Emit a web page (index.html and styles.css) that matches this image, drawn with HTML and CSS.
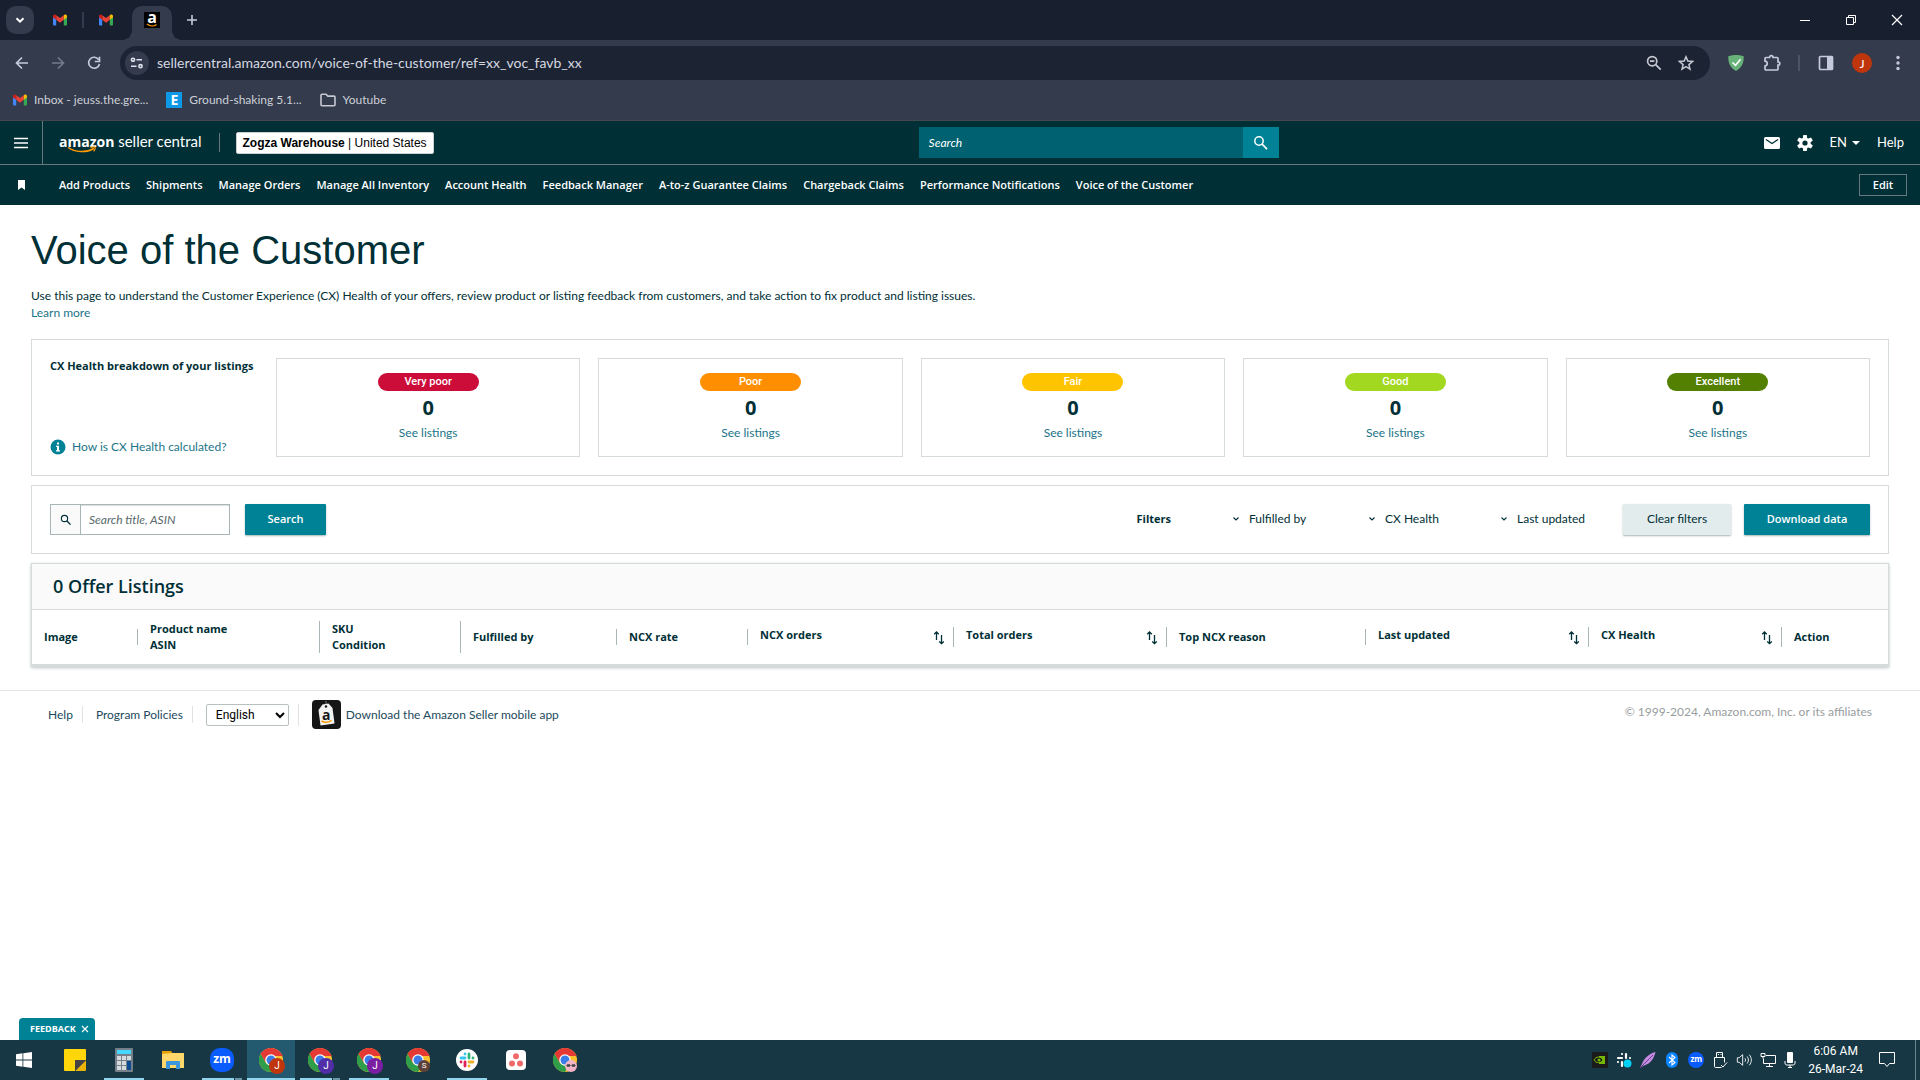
FILE: index.html
```html
<!DOCTYPE html>
<html lang="en">
<head>
  <meta charset="UTF-8" />
  <meta name="viewport" content="width=device-width, initial-scale=1.0" />
  <title>Voice of the Customer</title>
  <link rel="stylesheet" href="styles.css">
</head>
<body>

<!-- shared icons -->
<svg class="defs" width="0" height="0" aria-hidden="true">
  <symbol id="gmail" viewBox="0 0 14 12">
    <path fill="#4285f4" d="M0 3v7.500a1 1 0 0 0 1 1h2.200V5z"/>
    <path fill="#34a853" d="M14 3v7.500a1 1 0 0 1-1 1h-2.200V5z"/>
    <path fill="#ea4335" d="M3.200 5.800V1.200L7 4.100l3.800-2.900v4.600L7 8.700z"/>
    <path fill="#c5221f" d="M0 2.300C0 .6 1.700 0 2.800.9l.4.300v4.600L0 3.400z"/>
    <path fill="#fbbc04" d="M14 2.300C14 .6 12.300 0 11.200.9l-.4.300v4.600L14 3.400z"/>
  </symbol>
  <symbol id="search" viewBox="0 0 16 16">
    <circle cx="6" cy="6" r="4.200" fill="none" stroke="currentColor" stroke-width="1.500"/>
    <path d="M9 9l5 5.200" stroke="currentColor" stroke-width="1.800"/>
  </symbol>
  <symbol id="chevron" viewBox="0 0 8 8">
    <path d="M1.500 2.500L4 5l2.500-2.500" fill="none" stroke="currentColor" stroke-width="1.100"/>
  </symbol>
  <symbol id="sort" viewBox="0 0 12 14">
    <path d="M3.500 9V1M1.200 3.200L3.500 1l2.300 2.200M8.500 4v8.500M6.200 10.500l2.300 2.200 2.300-2.200" fill="none" stroke="currentColor" stroke-width="1.300"/>
  </symbol>
  <symbol id="chrome" viewBox="0 0 24 24">
    <circle cx="12" cy="12" r="12" fill="#fbc02d"/>
    <path fill="#e53935" d="M1.600 6A12 12 0 0 1 22.400 6L24 8H12L6.800 15z"/>
    <path fill="#2e9e4a" d="M1.600 6A12 12 0 0 0 12 24l5.200-9L12 17.500 6.800 15z"/>
    <circle cx="12" cy="12" r="5.800" fill="#fff"/>
    <circle cx="12" cy="12" r="4.500" fill="#3b7de8"/>
  </symbol>
</svg>

<!-- browser window -->
<div class="browser">
  <div class="tabs">
    <button class="tab-search" aria-label="Search tabs"><svg width="12" height="12" viewBox="0 0 12 12"><path d="M2.500 4.200L6 7.700l3.500-3.500" fill="none" stroke="#fff" stroke-width="2"/></svg></button>
    <button class="tab" aria-label="Gmail"><svg width="14" height="12"><use href="#gmail"/></svg></button>
    <span class="tab-line"></span>
    <button class="tab" aria-label="Gmail"><svg width="14" height="12"><use href="#gmail"/></svg></button>
    <button class="tab tab-active" aria-label="Amazon Seller Central"><span class="amazon-a">a<svg width="12" height="4" viewBox="0 0 12 4"><path d="M1 1c3 2.500 7 2.500 9.500.5" fill="none" stroke="#f90" stroke-width="1.300"/></svg></span></button>
    <button class="tab-new" aria-label="New tab"><svg width="12" height="12" viewBox="0 0 12 12"><path d="M6 1v10M1 6h10" stroke="#c5cbdc" stroke-width="1.600"/></svg></button>
    <div class="window-buttons">
      <button aria-label="Minimize"><svg width="12" height="12" viewBox="0 0 12 12"><path d="M1 6.500h10" stroke="#fff"/></svg></button>
      <button aria-label="Restore"><svg width="12" height="12" viewBox="0 0 12 12"><path d="M1.500 3.500h7v7h-7zM3.500 3.500v-2h7v7h-2" fill="none" stroke="#fff"/></svg></button>
      <button aria-label="Close"><svg width="12" height="12" viewBox="0 0 12 12"><path d="M1 1l10 10M11 1L1 11" stroke="#fff" stroke-width="1.200"/></svg></button>
    </div>
  </div>

  <div class="toolbar">
    <button class="tool" aria-label="Back"><svg width="16" height="16" viewBox="0 0 16 16"><path d="M14 8H3M8 2.500L2.500 8 8 13.500" fill="none" stroke="#c5cbdc" stroke-width="1.700"/></svg></button>
    <button class="tool" aria-label="Forward"><svg width="16" height="16" viewBox="0 0 16 16"><path d="M2 8h11M8 2.500L13.500 8 8 13.500" fill="none" stroke="#737b8b" stroke-width="1.700"/></svg></button>
    <button class="tool" aria-label="Reload"><svg width="16" height="16" viewBox="0 0 16 16"><path d="M12.800 4.800A5.500 5.500 0 1 0 13.500 9" fill="none" stroke="#c5cbdc" stroke-width="1.700"/><path d="M13.500 1.800v4.700H8.800" fill="none" stroke="#c5cbdc" stroke-width="1.700"/></svg></button>
    <div class="omnibox">
      <button class="site-info" aria-label="Site information"><svg width="14" height="12" viewBox="0 0 14 12"><g fill="none" stroke="#dfe3ee" stroke-width="1.600"><circle cx="3" cy="2.800" r="1.600"/><path d="M6.500 2.800H12M1 9.200h5.500"/><circle cx="10.500" cy="9.200" r="1.600"/></g></svg></button>
      <input type="text" aria-label="Address" value="sellercentral.amazon.com/voice-of-the-customer/ref=xx_voc_favb_xx">
      <button aria-label="Zoom"><svg width="16" height="16" viewBox="0 0 16 16"><g fill="none" stroke="#c6c9d2" stroke-width="1.700"><circle cx="6.200" cy="6.200" r="4.600"/><path d="M9.700 9.700l5 5M4 6.200h4.400"/></g></svg></button>
      <button aria-label="Bookmark this tab"><svg width="16" height="16" viewBox="0 0 16 16"><path d="M8 1.800l1.800 4.300 4.700.4-3.600 3.100 1.100 4.500L8 11.700l-4 2.400 1.100-4.500-3.600-3.100 4.700-.4z" fill="none" stroke="#c6c9d2" stroke-width="1.500"/></svg></button>
    </div>
    <div class="extensions">
      <button aria-label="Ad blocker"><svg width="16" height="16" viewBox="0 0 16 16"><path fill="#67b279" d="M8 0c2.500 0 5 .4 7.700 1.300C15.700 5 16 11.500 8 16 0 11.500.3 5 .3 1.300 3 .4 5.500 0 8 0z"/><path d="M4.500 7.500l3 2.800 5-6" fill="none" stroke="#fff" stroke-width="1.600"/></svg></button>
      <button aria-label="Extensions"><svg width="18" height="18" viewBox="0 0 18 18"><path d="M2 4.500a1 1 0 0 1 1-1h3.500C6.500.9 10 .9 10 3.500h4a1 1 0 0 1 1 1v3.300c2.400 0 2.400 3.400 0 3.400V15a1 1 0 0 1-1 1H3a1 1 0 0 1-1-1v-3c3-.4 3-4.400 0-4.800z" fill="none" stroke="#c5cbdc" stroke-width="1.700"/></svg></button>
      <span class="tool-line"></span>
      <button aria-label="Side panel"><svg width="16" height="16" viewBox="0 0 16 16"><rect x="1.500" y="1.500" width="13" height="13" rx="1" fill="none" stroke="#c5cbdc" stroke-width="1.700"/><path fill="#c5cbdc" d="M9 1h6v14H9z"/></svg></button>
      <button class="profile" aria-label="Profile J">J</button>
      <button aria-label="Menu"><svg width="16" height="16" viewBox="0 0 16 16" fill="#c5cbdc"><circle cx="8" cy="2.500" r="1.700"/><circle cx="8" cy="8" r="1.700"/><circle cx="8" cy="13.500" r="1.700"/></svg></button>
    </div>
  </div>

  <div class="bookmarks">
    <a href="#"><svg width="14" height="12"><use href="#gmail"/></svg>Inbox - jeuss.the.gre...</a>
    <a href="#"><span class="e-icon">E</span>Ground-shaking 5.1...</a>
    <a href="#"><svg width="16" height="14" viewBox="0 0 16 14"><path d="M1 2.200a1 1 0 0 1 1-1h4l1.800 1.900H14a1 1 0 0 1 1 1v7.700a1 1 0 0 1-1 1H2a1 1 0 0 1-1-1z" fill="none" stroke="#c6c9d2" stroke-width="1.600"/></svg>Youtube</a>
  </div>
</div>

<!-- seller central header -->
<header>
  <div class="header-top">
    <button class="menu-button" aria-label="Menu"><svg width="14" height="12" viewBox="0 0 14 12"><path d="M0 1.500h14M0 6h14M0 10.500h14" stroke="#fff" stroke-width="1.600"/></svg></button>
    <a class="logo" href="#"><b>amazon</b> <span>seller central</span>
      <svg width="30" height="8" viewBox="0 0 30 8"><path d="M1 1.500c7 5 18 5.500 26 1" fill="none" stroke="#f90" stroke-width="1.500"/><path d="M23.500 1.400c2-.6 4-.6 4.500 0 .4.700-.2 2.600-1.300 4" fill="none" stroke="#f90" stroke-width="1.200"/></svg>
    </a>
    <button class="account"><b>Zogza Warehouse</b> | United States</button>
    <form class="header-search">
      <input type="text" placeholder="Search" aria-label="Search Seller Central">
      <button type="button" aria-label="Search"><svg width="16" height="16"><use href="#search"/></svg></button>
    </form>
    <div class="header-links">
      <a href="#" aria-label="Messages"><svg width="16" height="12" viewBox="0 0 16 12"><rect width="16" height="12" rx="1.500" fill="#fff"/><path d="M2 2.500l6 4 6-4" fill="none" stroke="#002f36" stroke-width="1.300"/></svg></a>
      <a href="#" aria-label="Settings"><svg width="16" height="16" viewBox="0 0 16 16"><g fill="#fff"><circle cx="8" cy="8" r="5.600"/><path d="M6.200 0h3.600l.4 3.500H5.800zM6.200 16h3.600l.4-3.500H5.800z"/><path d="M6.200 0h3.600l.4 3.500H5.800zM6.200 16h3.600l.4-3.500H5.800z" transform="rotate(60 8 8)"/><path d="M6.200 0h3.600l.4 3.500H5.800zM6.200 16h3.600l.4-3.500H5.800z" transform="rotate(120 8 8)"/></g><circle cx="8" cy="8" r="2.600" fill="#002f36"/></svg></a>
      <button class="language">EN<svg width="8" height="4" viewBox="0 0 8 4"><path fill="#fff" d="M0 0h8L4 4z"/></svg></button>
      <a href="#">Help</a>
    </div>
  </div>
  <nav>
    <svg class="flag" width="7" height="10" viewBox="0 0 7 10"><path fill="#fff" d="M0 0h7v10L3.500 7.500 0 10z"/></svg>
    <a href="#">Add Products</a>
    <a href="#">Shipments</a>
    <a href="#">Manage Orders</a>
    <a href="#">Manage All Inventory</a>
    <a href="#">Account Health</a>
    <a href="#">Feedback Manager</a>
    <a href="#">A-to-z Guarantee Claims</a>
    <a href="#">Chargeback Claims</a>
    <a href="#">Performance Notifications</a>
    <a href="#">Voice of the Customer</a>
    <button class="edit">Edit</button>
  </nav>
</header>

<main>
  <h1>Voice of the Customer</h1>
  <p class="intro">Use this page to understand the Customer Experience (CX) Health of your offers, review product or listing feedback from customers, and take action to fix product and listing issues.<br><a href="#">Learn more</a></p>

  <section class="panel breakdown">
    <div class="breakdown-info">
      <h2>CX Health breakdown of your listings</h2>
      <a href="#"><svg width="16" height="16" viewBox="0 0 16 16"><circle cx="8" cy="8" r="7.500" fill="#008296"/><path fill="#fff" d="M7 3.500h2v2H7zM6 6.800h3v4.400h1v1.300H6v-1.300h1V8.100H6z"/></svg>How is CX Health calculated?</a>
    </div>
    <div class="card"><span class="pill very-poor">Very poor</span><strong>0</strong><a href="#">See listings</a></div>
    <div class="card"><span class="pill poor">Poor</span><strong>0</strong><a href="#">See listings</a></div>
    <div class="card"><span class="pill fair">Fair</span><strong>0</strong><a href="#">See listings</a></div>
    <div class="card"><span class="pill good">Good</span><strong>0</strong><a href="#">See listings</a></div>
    <div class="card"><span class="pill excellent">Excellent</span><strong>0</strong><a href="#">See listings</a></div>
  </section>

  <section class="panel filter-bar">
    <form class="listing-search">
      <label for="asin"><svg width="12" height="12"><title>Search listings</title><use href="#search"/></svg></label>
      <input id="asin" type="text" placeholder="Search title, ASIN">
      <button type="button" class="btn btn-primary btn-search">Search</button>
    </form>
    <div class="filters">
      <strong>Filters</strong>
      <label><svg width="8" height="8"><use href="#chevron"/></svg><select aria-label="Fulfilled by"><option>Fulfilled by</option></select></label>
      <label><svg width="8" height="8"><use href="#chevron"/></svg><select aria-label="CX Health"><option>CX Health</option></select></label>
      <label><svg width="8" height="8"><use href="#chevron"/></svg><select aria-label="Last updated"><option>Last updated</option></select></label>
    </div>
    <button class="btn btn-clear">Clear filters</button>
    <button class="btn btn-primary btn-download">Download data</button>
  </section>

  <section class="panel listings">
    <h2>0 Offer Listings</h2>
    <table>
      <colgroup>
        <col class="c-image"><col class="c-name"><col class="c-sku"><col class="c-fulfilled"><col class="c-rate"><col class="c-ncx"><col class="c-total"><col class="c-reason"><col class="c-updated"><col class="c-health"><col>
      </colgroup>
      <thead>
        <tr>
          <th><div>Image</div></th>
          <th><div>Product name<br>ASIN</div></th>
          <th><div>SKU<br>Condition</div></th>
          <th><div>Fulfilled by</div></th>
          <th><div>NCX rate</div></th>
          <th><div class="sortable">NCX orders<button aria-label="Sort by NCX orders"><svg width="12" height="14"><use href="#sort"/></svg></button></div></th>
          <th><div class="sortable">Total orders<button aria-label="Sort by total orders"><svg width="12" height="14"><use href="#sort"/></svg></button></div></th>
          <th><div>Top NCX reason</div></th>
          <th><div class="sortable">Last updated<button aria-label="Sort by last updated"><svg width="12" height="14"><use href="#sort"/></svg></button></div></th>
          <th><div class="sortable">CX Health<button aria-label="Sort by CX Health"><svg width="12" height="14"><use href="#sort"/></svg></button></div></th>
          <th><div>Action</div></th>
        </tr>
      </thead>
    </table>
  </section>
</main>

<footer>
  <a class="foot-help" href="#">Help</a>
  <a class="foot-policies" href="#">Program Policies</a>
  <div class="foot-language"><select aria-label="Language"><option>English</option></select></div>
  <a class="foot-app" href="#"><svg width="29" height="29" viewBox="0 0 29 29"><rect width="29" height="29" rx="4" fill="#161616"/><path d="M14 6V1" stroke="#777"/><path fill="#f4f4f4" d="M10.500 4.500l6-1 4 4.500 2 15.500-14 2L6.500 10z"/><circle cx="14" cy="6.500" r="1.200" fill="#161616"/><text x="10" y="19.500" font-size="14" font-weight="700" font-family="Open Sans" fill="#161616">a</text><path d="M9.500 21c3.500 2 7 1.500 10-.7" fill="none" stroke="#f90" stroke-width="1.500"/></svg>Download the Amazon Seller mobile app</a>
  <small>© 1999-2024, Amazon.com, Inc. or its affiliates</small>
</footer>

<div class="feedback-row">
  <button class="feedback">FEEDBACK <svg width="8" height="8" viewBox="0 0 8 8"><path d="M1 1l6 6M7 1L1 7" stroke="#fff" stroke-width="1.100"/></svg></button>
</div>

<!-- windows taskbar -->
<div class="taskbar">
  <button aria-label="Start"><svg width="16" height="16" viewBox="0 0 16 16" fill="#fff"><path d="M0 2.200l6.500-.9v6.300H0zM7.300 1.200L16 0v7.600H7.300zM0 8.400h6.500v6.300L0 13.800zM7.300 8.400H16V16l-8.700-1.200z"/></svg></button>
  <button aria-label="Sticky Notes"><svg width="22" height="22" viewBox="0 0 22 22"><path fill="#ffd60a" d="M1 0h20a1 1 0 0 1 1 1v10h-11v11H1a1 1 0 0 1-1-1V1a1 1 0 0 1 1-1z"/><path fill="#eab308" d="M22 11v10a1 1 0 0 1-1 1H11z"/><path fill="#444" d="M11 11h11L11 22z"/></svg></button>
  <button class="open" aria-label="Calculator"><svg width="18" height="24" viewBox="0 0 18 24"><rect width="18" height="24" rx="1" fill="#75808b"/><rect x="2" y="2" width="14" height="4" fill="#45d8ff"/><path fill="#d5dade" d="M2 8h4v4H2zM7 8h4v4H7zM12 8h4v4h-4zM2 13h4v4H2zM7 13h4v4H7zM2 18h4v4H2zM7 18h4v4H7z"/><path fill="#0b4a8f" d="M12 13h4v9h-4z"/></svg></button>
  <button aria-label="File Explorer"><svg width="22" height="18" viewBox="0 0 22 18"><path fill="#e6a100" d="M0 0h9l2 3H0z"/><path fill="#ffd76a" d="M0 3l10-1h12v15H0z"/><path fill="#3a96dd" d="M4 18v-7a1 1 0 0 1 1-1h12a1 1 0 0 1 1 1v7h-4v-4H8v4z"/></svg></button>
  <button class="open stacked" aria-label="Zoom"><span class="zoom-icon">zm</span></button>
  <button class="open current" aria-label="Chrome J"><span class="chrome-icon"><svg width="24" height="24"><use href="#chrome"/></svg><i class="badge red">J</i></span></button>
  <button class="open stacked" aria-label="Chrome J"><span class="chrome-icon"><svg width="24" height="24"><use href="#chrome"/></svg><i class="badge indigo">J</i></span></button>
  <button class="open" aria-label="Chrome J"><span class="chrome-icon"><svg width="24" height="24"><use href="#chrome"/></svg><i class="badge purple">J</i></span></button>
  <button aria-label="Chrome S"><span class="chrome-icon"><svg width="24" height="24"><use href="#chrome"/></svg><i class="badge brown">S</i></span></button>
  <button class="open" aria-label="Slack"><svg width="22" height="22" viewBox="0 0 22 22"><circle cx="11" cy="11" r="11" fill="#fff"/><g stroke-width="2.800" stroke-linecap="round"><path d="M9 5v0M5 9h4" stroke="#36c5f0"/><path d="M13 5v4M17 9v0" stroke="#2eb67d"/><path d="M13 13h4M13 17v0" stroke="#ecb22e"/><path d="M9 13v4M5 13v0" stroke="#e01e5a"/></g></svg></button>
  <button aria-label="Asana"><svg width="20" height="20" viewBox="0 0 20 20"><rect width="20" height="20" rx="4" fill="#fff"/><g fill="#f06a6a"><circle cx="10" cy="6.200" r="3"/><circle cx="6" cy="13.500" r="3"/><circle cx="14" cy="13.500" r="3"/></g></svg></button>
  <button aria-label="Chrome"><span class="chrome-icon"><svg width="24" height="24"><use href="#chrome"/></svg><i class="badge pink"><svg width="12" height="12" viewBox="0 0 12 12"><path d="M1 5.500h10" stroke="#777"/><path d="M2 5.500h3M7 5.500h3" stroke="#444" stroke-width="2.600"/></svg></i></span></button>

  <div class="tray">
    <svg width="16" height="16" viewBox="0 0 16 16"><rect width="16" height="16" fill="#1b1b1b"/><path fill="#76b900" d="M7 4h6v8H7z"/><path d="M2 8c2-4 7-4 9 0-2 3.500-7 3.500-9 0z" fill="#1b1b1b" stroke="#76b900"/><circle cx="7" cy="8" r="1.500" fill="#76b900"/></svg>
    <svg width="16" height="16" viewBox="0 0 16 16"><g stroke="#fff" stroke-width="2.200" stroke-linecap="round"><path d="M6 2v0M2 6h4M10 2v4M14 6v0M6 10v4M2 10v0M10 10h3"/></g><circle cx="11.500" cy="11.500" r="4" fill="#00d0f5"/></svg>
    <svg width="16" height="16" viewBox="0 0 16 16"><path fill="#c58be0" d="M15.500 0C10 1 4 6 2 12l-2 4 4-2.500C10 12 14 7 15.500 0z"/><path d="M0 16L13 3" stroke="#6d3d95"/></svg>
    <svg width="16" height="16" viewBox="0 0 16 16"><rect x="2" width="12" height="16" rx="6" fill="#0a84ff"/><path d="M5 5l6 5.500L8 13V3l3 2.500L5 11" fill="none" stroke="#fff" stroke-width="1.100"/></svg>
    <span class="zoom-small">zm</span>
    <svg width="16" height="16" viewBox="0 0 16 16"><path d="M4.500 5V.5h6V5M9.500 15.500h-6a1 1 0 0 1-1-1V5.500h10v5M6 2.500h1M8.500 2.500h1M9 13l2 2 4-4.500" fill="none" stroke="#fff"/></svg>
    <svg width="16" height="16" viewBox="0 0 18 16"><path d="M1.500 5.500v5h2l4 3.500V2l-4 3.500zM10 6c1 1.200 1 2.800 0 4M12.500 4c2 2.500 2 5.500 0 8M15 2c3 3.800 3 8.200 0 12" fill="none" stroke="#fff"/></svg>
    <svg width="16" height="16" viewBox="0 0 16 16"><path d="M6 3.500h9.500v8H3.500v-5M1 1.500h4v3H1zM3 4.500v2M9.500 11.500v3M6 14.500h7" fill="none" stroke="#fff"/></svg>
    <svg width="12" height="16" viewBox="0 0 12 16"><rect x="3" width="6" height="11" rx="1" fill="#fff"/><path d="M1 9v2c0 1.500 1 2 2 2h6c1 0 2-.5 2-2V9M6 13v3M4 15.500h4" fill="none" stroke="#fff"/></svg>
    <time>6:06 AM<br>26-Mar-24</time>
    <svg width="16" height="16" viewBox="0 0 16 16"><path d="M.5.500h15v11h-5L8 14.500 5.500 11.500h-5z" fill="none" stroke="#fff"/></svg>
  </div>
</div>

</body>
</html>
```

FILE: styles.css
```css
* {
  box-sizing: border-box;
}

body {
  margin: 0;
  min-height: 100vh;
  display: flex;
  flex-direction: column;
  font-family: Lato, sans-serif;
  font-size: 12px;
  line-height: 17px;
  color: #002f36;
  background: #fff;
}

button, input, select {
  font: inherit;
  color: inherit;
  margin: 0;
  padding: 0;
  border: none;
  background: none;
}

button {
  cursor: pointer;
}

a {
  color: #1b7489;
  text-decoration: none;
}

svg {
  display: block;
  flex: none;
}

.defs {
  position: absolute;
}

/* browser */
.browser {
  background: #333b4c;
  border-bottom: 1px solid #45484e;
}

.browser button {
  display: flex;
  align-items: center;
  justify-content: center;
}

.tabs {
  display: flex;
  align-items: center;
  height: 40px;
  padding-left: 6px;
  background: #18202f;
}

.tab-search {
  width: 28px;
  height: 28px;
  margin-right: 6px;
  border-radius: 10px;
  background: #333b4c;
}

.tab {
  width: 40px;
  height: 28px;
}

.tab-line {
  width: 2px;
  height: 16px;
  margin: 0 2px;
  background: #333b4c;
}

.tab-active {
  position: relative;
  align-self: flex-end;
  height: 34px;
  margin-left: 6px;
  padding-bottom: 6px;
  border-radius: 10px 10px 0 0;
  background: #333b4c;
}

.tab-active::before, .tab-active::after {
  content: "";
  position: absolute;
  bottom: 0;
  width: 10px;
  height: 10px;
}

.tab-active::before {
  right: 100%;
  background: radial-gradient(circle at 0 0, #18202f 10px, #333b4c 10px);
}

.tab-active::after {
  left: 100%;
  background: radial-gradient(circle at 100% 0, #18202f 10px, #333b4c 10px);
}

.amazon-a {
  display: flex;
  flex-direction: column;
  align-items: center;
  width: 16px;
  height: 16px;
  background: #000;
  color: #fff;
  font: 700 16px/11px "Open Sans", sans-serif;
}

.tab-new {
  width: 40px;
  height: 28px;
}

.window-buttons {
  display: flex;
  margin-left: auto;
}

.window-buttons button {
  width: 46px;
  height: 40px;
}

.toolbar {
  display: flex;
  align-items: center;
  height: 46px;
  padding: 0 4px;
}

.tool {
  width: 36px;
  height: 34px;
}

.omnibox {
  flex: 1;
  display: flex;
  align-items: center;
  height: 34px;
  margin: 0 8px;
  padding: 0 8px 0 5px;
  border-radius: 17px;
  background: #1c2434;
}

.omnibox input {
  flex: 1;
  padding: 0 0 2px 8px;
  font-size: 14px;
  color: #d5d8e0;
}

.omnibox button {
  width: 32px;
  height: 24px;
}

.omnibox .site-info {
  width: 24px;
  border-radius: 12px;
  background: #333b4c;
}

.extensions {
  display: flex;
  align-items: center;
}

.extensions button {
  width: 36px;
  height: 20px;
}

.tool-line {
  width: 2px;
  height: 16px;
  margin: 0 8px;
  background: #4c5466;
}

.extensions .profile {
  width: 20px;
  margin: 0 8px;
  border-radius: 50%;
  background: #bf360c;
  color: #fff;
}

.bookmarks {
  display: flex;
  gap: 18px;
  height: 34px;
  padding: 0 13px 7px;
}

.bookmarks a {
  display: flex;
  align-items: center;
  gap: 7px;
  color: #cdd0d8;
}

.e-icon {
  width: 16px;
  height: 16px;
  background: #0d99e8;
  color: #fff;
  font: 700 14px/16px "Open Sans", sans-serif;
  text-align: center;
}

/* header */
header {
  background: #002f36;
  color: #fff;
}

header a {
  color: #fff;
}

.header-top {
  display: flex;
  align-items: center;
  height: 44px;
  border-bottom: 1px solid #667a7d;
}

.menu-button {
  display: flex;
  align-items: center;
  justify-content: center;
  align-self: stretch;
  width: 43px;
  border-right: 1px solid #667a7d;
}

.logo {
  position: relative;
  margin-left: 16px;
  padding: 0 17px 2px 0;
  border-right: 1px solid #667a7d;
  font-size: 15px;
}

.logo b {
  font-family: "Open Sans", sans-serif;
  font-size: 14px;
}

.logo svg {
  position: absolute;
  left: 8px;
  top: 13px;
}

.account {
  height: 22px;
  margin-left: 16px;
  padding: 1px 6px 0;
  border: 1px solid #c9cfcf;
  border-radius: 2px;
  background: #fff;
  color: #000;
  font-family: "Liberation Sans", sans-serif;
}

.header-search {
  display: flex;
  width: 360px;
  height: 31px;
  margin: 0 auto;
}

.header-search input {
  flex: 1;
  padding-left: 10px;
  background: #006170;
}

.header-search input::placeholder {
  color: #fff;
  font-style: italic;
  opacity: 1;
}

.header-search button {
  display: flex;
  align-items: center;
  justify-content: center;
  width: 36px;
  background: #008296;
}

.header-links {
  display: flex;
  align-items: center;
  gap: 17px;
  padding-right: 16px;
  font-size: 13px;
}

.language {
  display: flex;
  align-items: center;
  gap: 5px;
}

nav {
  display: flex;
  align-items: center;
  gap: 16px;
  height: 40px;
  padding: 0 13px 0 18px;
  font-family: "Open Sans", sans-serif;
  font-size: 11px;
  font-weight: 600;
}

nav a {
  padding-bottom: 2px;
}

.flag {
  margin-right: 18px;
}

.edit {
  width: 48px;
  height: 22px;
  margin-left: auto;
  padding-bottom: 1px;
  border: 1px solid #667a7d;
}

/* page */
main {
  padding: 20px 31px 0;
}

h1 {
  margin: 0;
  font: 400 40px/50px "Liberation Sans", sans-serif;
}

.intro {
  margin: 12px 0 18px;
}

.panel {
  border: 1px solid #d5dbdb;
  margin-bottom: 9px;
}

.breakdown {
  display: grid;
  grid-template-columns: 208px repeat(5, 1fr);
  gap: 18px;
  padding: 18px;
}

.breakdown-info {
  display: flex;
  flex-direction: column;
  justify-content: space-between;
  padding-bottom: 2px;
}

.breakdown-info h2 {
  margin: 0;
  font: 700 11px/15px "Open Sans", sans-serif;
  white-space: nowrap;
}

.breakdown-info a {
  display: flex;
  align-items: center;
  gap: 6px;
}

.card {
  display: flex;
  flex-direction: column;
  align-items: center;
  height: 99px;
  padding-top: 14px;
  border: 1px solid #d5dbdb;
}

.card strong {
  font: 700 20px/33px "Open Sans", sans-serif;
}

.pill {
  width: 101px;
  border-radius: 9px;
  color: #fff;
  font: 500 11px/18px Roboto, sans-serif;
  text-align: center;
}

.very-poor { background: #cc0c39; }
.poor { background: #ff8f00; }
.fair { background: #ffc400; }
.good { background: #a2d820; }
.excellent { background: #538000; }

.filter-bar {
  display: flex;
  align-items: center;
  gap: 13px;
  padding: 18px;
}

.listing-search {
  display: flex;
  margin-right: auto;
}

.listing-search label {
  display: flex;
  align-items: center;
  justify-content: center;
  width: 30px;
  border: 1px solid #a8b6b8;
  border-right: none;
  background: #fafafa;
}

.listing-search input {
  width: 150px;
  padding: 0 0 1px 8px;
  border: 1px solid #a8b6b8;
  box-shadow: inset 0 1px 1px #ddd;
}

.listing-search input::placeholder {
  color: #59696c;
  font-style: italic;
}

.btn {
  height: 31px;
  padding-bottom: 2px;
  border-radius: 1px;
  background: #e3eced;
  box-shadow: 0 1px 2px #a9b5b6;
}

.btn-primary {
  background: #008296;
  color: #fff;
  font-family: "Open Sans", sans-serif;
  font-size: 11px;
  font-weight: 600;
}

.btn-search {
  width: 81px;
  margin-left: 15px;
}

.btn-clear {
  width: 108px;
}

.btn-download {
  width: 126px;
}

.filters {
  display: flex;
  align-items: center;
  gap: 61px;
  margin-right: 24px;
  padding-bottom: 2px;
}

.filters strong {
  font: 700 11px/17px "Open Sans", sans-serif;
}

.filters label {
  display: flex;
  align-items: center;
  gap: 9px;
}

.filters select {
  appearance: none;
}

.listings {
  margin-bottom: 0;
  border-bottom-width: 3px;
  box-shadow: 0 1px 3px #bcc6c7;
}

.listings h2 {
  margin: 0;
  padding: 10px 21px;
  border-bottom: 1px solid #d5dbdb;
  background: #fafafa;
  font: 600 18px/25px "Open Sans", sans-serif;
}

table {
  width: 100%;
  table-layout: fixed;
  border-collapse: collapse;
}

th {
  height: 54px;
  padding: 0;
  font: 700 11px/16px "Open Sans", sans-serif;
  text-align: left;
}

th div {
  padding-left: 12px;
  border-right: 1px solid #a8b6b8;
}

th:last-child div {
  border-right: none;
}

.sortable {
  display: flex;
  justify-content: space-between;
  height: 20px;
  padding-right: 8px;
}

.sortable svg {
  margin-top: 1px;
}

.c-image { width: 106px; }
.c-name { width: 182px; }
.c-sku { width: 141px; }
.c-fulfilled { width: 156px; }
.c-rate { width: 131px; }
.c-ncx { width: 206px; }
.c-total { width: 213px; }
.c-reason { width: 199px; }
.c-updated { width: 223px; }
.c-health { width: 193px; }

footer {
  display: flex;
  align-items: center;
  margin-top: 23px;
  padding: 9px 48px;
  border-top: 1px solid #e3e6e6;
}

footer a {
  color: #1d4a5c;
}

.foot-help, .foot-policies, .foot-language {
  padding-right: 9px;
  margin-right: 13px;
  border-right: 1px solid #dfe3e3;
}

.foot-language select {
  display: block;
  width: 83px;
  height: 22px;
  padding-left: 5px;
  border: 1px solid #b8c0c0;
  border-radius: 2px;
  background: #fff;
  color: #000;
  font-family: Roboto, sans-serif;
}

.foot-app {
  display: flex;
  align-items: center;
  gap: 5px;
}

footer small {
  margin-left: auto;
  padding-bottom: 6px;
  font-size: 12px;
  color: #979d9e;
}

.feedback-row {
  margin-top: auto;
  padding-left: 19px;
}

.feedback {
  display: flex;
  align-items: center;
  gap: 5px;
  height: 22px;
  padding: 0 6px 0 11px;
  border-radius: 4px 4px 0 0;
  background: #008296;
  color: #fff;
  font: 700 9px/20px "Open Sans", sans-serif;
}

/* taskbar */
.taskbar {
  display: flex;
  gap: 1px;
  height: 40px;
  background: #163743;
  color: #fff;
}

.taskbar > button {
  display: flex;
  align-items: center;
  justify-content: center;
  width: 48px;
}

.taskbar > button:first-child {
  margin-right: 2px;
}

.open {
  background: linear-gradient(#93d5ec, #93d5ec) 4px 38px / 40px 2px no-repeat;
}

.stacked {
  background: linear-gradient(to right, #93d5ec 32px, #163743 32px, #163743 33px, #6a98a9 33px) 4px 38px / 40px 2px no-repeat;
}

.current {
  background: linear-gradient(#93d5ec, #93d5ec) 0 38px / 48px 2px no-repeat #235a70;
}

.zoom-icon {
  width: 24px;
  height: 24px;
  border-radius: 10px;
  background: #0b5cff;
  font: 700 12px/22px "Open Sans", sans-serif;
}

.zoom-small {
  width: 16px;
  height: 16px;
  border-radius: 8px;
  background: #0b5cff;
  font: 700 8px/14px "Open Sans", sans-serif;
  text-align: center;
}

.chrome-icon {
  position: relative;
}

.badge {
  position: absolute;
  left: 10px;
  top: 10px;
  width: 16px;
  height: 16px;
  border-radius: 50%;
  font: 400 10px/16px Roboto, sans-serif;
  text-align: center;
}

.red { background: #bf360c; }
.indigo { background: #512da8; }
.purple { background: #7b1fa2; }

.brown, .pink {
  left: 12px;
  top: 12px;
  width: 12px;
  height: 12px;
  font-size: 8px;
  line-height: 12px;
}

.brown { background: #5d4037; }
.pink { background: #f3b4c8; }

.tray {
  display: flex;
  align-items: center;
  gap: 8px;
  margin: 0 4px 0 auto;
  padding-right: 20px;
  border-right: 1px solid #6b8690;
}

.tray time {
  margin: 0 8px 0 4px;
  font: 400 12px/18px Roboto, sans-serif;
  text-align: center;
}
```
